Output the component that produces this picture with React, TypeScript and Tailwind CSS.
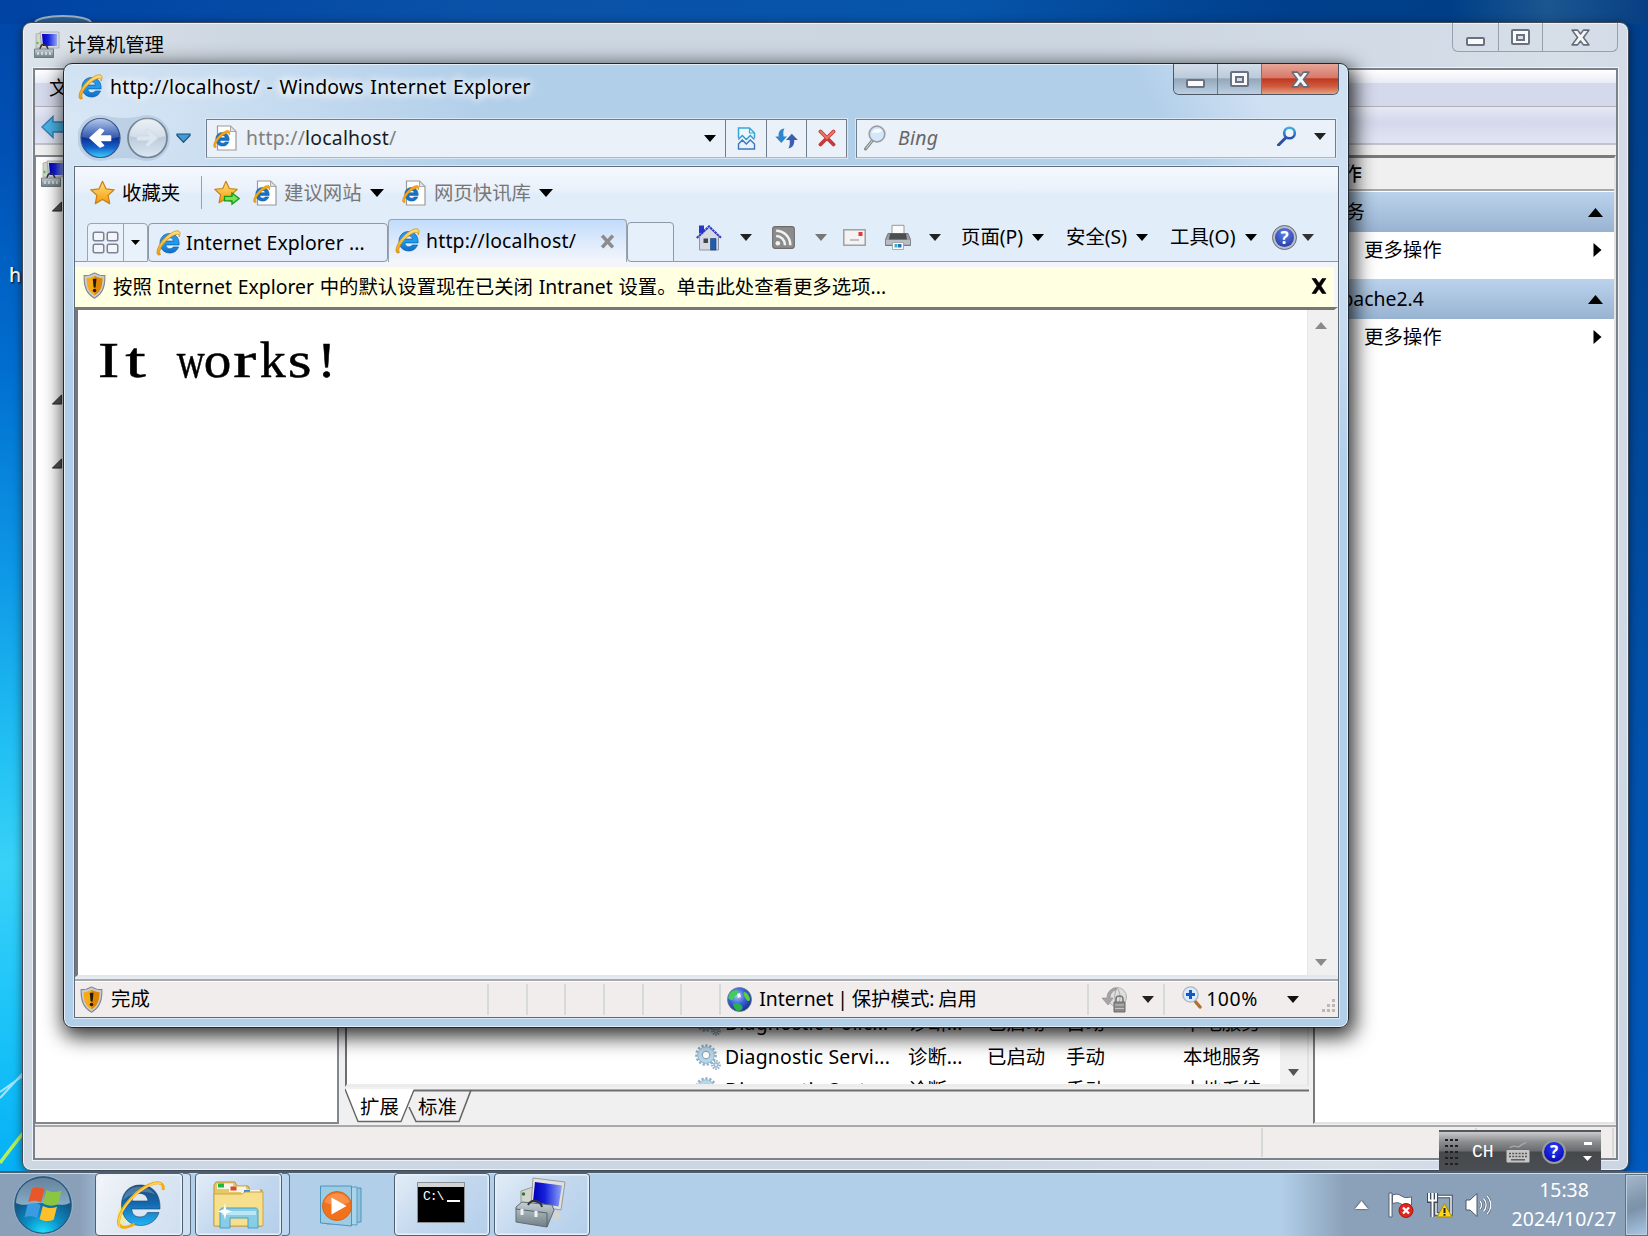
import React from "react";

type P = { className?: string };

/* ---------- small glyphs ---------- */
const Down = ({ className = "w-[11px] h-[7px] text-black" }: P) => (
  <svg viewBox="0 0 12 7" preserveAspectRatio="none" className={"shrink-0 " + className}>
    <path d="M0 0h12L6 7z" fill="currentColor" />
  </svg>
);
const Up = ({ className = "w-[15px] h-[9px] text-black" }: P) => (
  <svg viewBox="0 0 12 7" preserveAspectRatio="none" className={"shrink-0 " + className}>
    <path d="M0 7h12L6 0z" fill="currentColor" />
  </svg>
);
const Right = ({ className = "" }: P) => (
  <svg viewBox="0 0 8 14" className={"shrink-0 w-[9px] h-[14px] " + className}>
    <path d="M0 0v14l8-7z" fill="#000" />
  </svg>
);

/* ---------- icons ---------- */
const Gradients = () => (
  <svg className="absolute w-0 h-0">
    <defs>
      <linearGradient id="ieBlue" x1="0" y1="0" x2="0" y2="1">
        <stop offset="0" stopColor="#2a8fe0" />
        <stop offset=".5" stopColor="#1c9df0" />
        <stop offset="1" stopColor="#0e6cc4" />
      </linearGradient>
      <linearGradient id="ieDark" x1="0" y1="0" x2="0" y2="1">
        <stop offset="0" stopColor="#1c4b78" />
        <stop offset=".45" stopColor="#1567ad" />
        <stop offset="1" stopColor="#22b4f5" />
      </linearGradient>
      <linearGradient id="gold" x1="0" y1="0" x2="0" y2="1">
        <stop offset="0" stopColor="#ffe27a" />
        <stop offset="1" stopColor="#f39a0c" />
      </linearGradient>
      <linearGradient id="screen" x1="0" y1="0" x2="1" y2="0">
        <stop offset="0" stopColor="#0000b4" />
        <stop offset=".4" stopColor="#1420dc" />
        <stop offset="1" stopColor="#8fa4f5" />
      </linearGradient>
      <linearGradient id="steel" x1="0" y1="0" x2="0" y2="1">
        <stop offset="0" stopColor="#c5d0d4" />
        <stop offset="1" stopColor="#6f7f86" />
      </linearGradient>
      <radialGradient id="globe" cx=".4" cy=".35" r=".7">
        <stop offset="0" stopColor="#a8c4f8" />
        <stop offset=".5" stopColor="#3a62d8" />
        <stop offset="1" stopColor="#16288c" />
      </radialGradient>
      <linearGradient id="lens" x1="0" y1="0" x2="0" y2="1">
        <stop offset="0" stopColor="#3fb2e0" />
        <stop offset="1" stopColor="#2a4fa8" />
      </linearGradient>
      <linearGradient id="backBtn" x1="0" y1="0" x2="0" y2="1">
        <stop offset="0" stopColor="#a9bfe4" />
        <stop offset=".3" stopColor="#3f68bd" />
        <stop offset=".5" stopColor="#0c2f92" />
        <stop offset=".75" stopColor="#1464cc" />
        <stop offset="1" stopColor="#39d3ff" />
      </linearGradient>
      <linearGradient id="fwdBtn" x1="0" y1="0" x2="0" y2="1">
        <stop offset="0" stopColor="#dfe9f2" />
        <stop offset=".5" stopColor="#bccbdb" />
        <stop offset="1" stopColor="#dce9f5" />
      </linearGradient>
      <radialGradient id="orb" cx=".5" cy="1" r=".95">
        <stop offset="0" stopColor="#1fe4ff" />
        <stop offset=".35" stopColor="#0a8fc6" />
        <stop offset=".7" stopColor="#135787" />
        <stop offset="1" stopColor="#35597c" />
      </radialGradient>
      <linearGradient id="orbGloss" x1="0" y1="0" x2="0" y2="1">
        <stop offset="0" stopColor="#ffffff" stopOpacity=".25" />
        <stop offset="1" stopColor="#ffffff" stopOpacity=".5" />
      </linearGradient>
    </defs>
  </svg>
);

const IE = ({ className = "w-[26px] h-[26px]" }: P) => (
  <svg viewBox="0 0 26 26" className={"shrink-0 " + className}>
    <path
      d="M13.5 3.500C8 3.500 4 7.700 4 13.200s4 9.800 9.800 9.800c4.200 0 7.300-2.200 8.700-6h-5.200c-.7 1.200-1.900 1.800-3.400 1.800-2.300 0-3.900-1.500-4-3.900h13.200C23.600 8.200 19.600 3.500 13.500 3.500zm-3.600 7.600c.3-2 1.700-3.300 3.800-3.300s3.500 1.200 3.700 3.300z"
      fill="url(#ieBlue)"
      stroke="#0d5aa8"
      strokeWidth=".7"
    />
    <path
      d="M4.500 24.500C1.800 26 .4 24 1.200 20.500 2.500 14.500 9 6 16.500 2.300 21 0 24.500.3 24 4.200c-.1.900-.4 1.900-.8 2.800.2-2.300-.8-3.300-3.400-2.500C13.500 6.600 5.500 14.500 4 20.500c-.4 1.800-.2 3 .5 4z"
      fill="url(#gold)"
      stroke="#c98a10"
      strokeWidth=".7"
    />
  </svg>
);
const BigIE = () => (
  <svg viewBox="0 0 56 52" className="w-[56px] h-[52px]">
    <path d="M12 48C2 44 6 30 12 22l8 4z" fill="#eef07a" opacity=".6" />
    <path
      d="M29 6C18 6 10.500 14 10.500 26S18 46.500 29.500 46.500c9 0 16-5 18.500-13H36.500c-1.500 3-4 4.500-7.500 4.500-5 0-8-3-8.300-8H49C49.500 15 42 6 29 6zm-8 16c.8-4.500 3.600-7.500 8-7.500s7.500 3 8 7.500z"
      fill="url(#ieDark)"
      stroke="#10426e"
      strokeWidth=".6"
    />
    <path d="M12 21C14 11 22 7 29 7.500c6 0 12 3 15 8-8-4-20-4-32 5.500z" fill="#fff" opacity=".22" />
    <path
      d="M52 11c1.500-6-3-8.500-10-6.500C28 8.500 9 28 7.500 42c-.5 6 5 9 16 3"
      fill="none"
      stroke="#f3ad13"
      strokeWidth="3"
    />
    <path d="M50 5C44 1 26 11 14 28 8 36 6 42 9 48" fill="none" stroke="#ffd560" strokeWidth="1.300" />
  </svg>
);
const PageIE = () => (
  <svg viewBox="0 0 24 26" className="w-[24px] h-[26px] shrink-0">
    <path d="M4.500 1h13l5.500 5.500V25H4.500z" fill="#fff" stroke="#9a9a9a" strokeWidth="1.200" />
    <path d="M17.500 1v5.500H23z" fill="#e4e4e4" stroke="#a8a8a8" />
    <g transform="translate(0 5) scale(.7)">
      <path
        d="M13.500 3.500C8 3.500 4 7.700 4 13.200s4 9.800 9.800 9.800c4.200 0 7.300-2.200 8.700-6h-5.200c-.7 1.200-1.900 1.800-3.400 1.800-2.300 0-3.900-1.500-4-3.900h13.200C23.600 8.200 19.600 3.500 13.500 3.500zm-3.600 7.600c.3-2 1.700-3.300 3.800-3.300s3.500 1.200 3.700 3.300z"
        fill="#1574c8"
        stroke="#0d5aa8"
        strokeWidth=".8"
      />
      <path
        d="M4.500 24.500C1.800 26 .4 24 1.200 20.500 2.500 14.500 9 6 16.500 2.300 21 0 24.500.3 24 4.200c-.1.900-.4 1.900-.8 2.800.2-2.300-.8-3.300-3.400-2.500C13.500 6.600 5.500 14.500 4 20.500c-.4 1.800-.2 3 .5 4z"
        fill="#f7a813"
        stroke="#e08e08"
        strokeWidth="1"
      />
    </g>
  </svg>
);
const starPath = "M12 .8l3.300 7.200 7.900.9-5.800 5.400 1.500 7.900L12 18.300l-6.900 3.900 1.500-7.900L.8 8.900l7.900-.9z";
const Star = () => (
  <svg viewBox="0 0 24 24" className="w-[25px] h-[26px] shrink-0">
    <path d={starPath} fill="url(#gold)" stroke="#c98216" strokeWidth="1.200" strokeLinejoin="round" />
  </svg>
);
const StarAdd = () => (
  <svg viewBox="0 0 26 25" className="w-[26px] h-[26px] shrink-0">
    <path d={starPath} fill="url(#gold)" stroke="#c98216" strokeWidth="1.200" strokeLinejoin="round" />
    <path d="M10.500 15.800h7.500v-3.300l7.200 5.500-7.200 5.700v-3.400h-7.500z" fill="#7be05a" stroke="#149a14" strokeWidth="1.300" />
  </svg>
);
const Shield = () => (
  <svg viewBox="0 0 22 26" className="w-[23px] h-[27px] shrink-0">
    <path d="M11 .8c3 2 6.500 2.700 10 2.700.4 10-1.500 17.500-10 21.700C2.500 21 .6 13.500 1 3.500c3.500 0 7-.7 10-2.700z" fill="#c9ccd0" stroke="#84888d" />
    <path d="M11 3.600c2.300 1.500 4.800 2.200 7.600 2.400 0 7.700-1.600 13-7.600 16.400C5 19 3.400 13.700 3.400 6c2.800-.2 5.300-.9 7.600-2.400z" fill="#f7ab18" />
    <path d="M11 3.600c2.300 1.500 4.800 2.200 7.600 2.400 0 7.700-1.600 13-7.600 16.400z" fill="#dd8505" />
    <path d="M9.300 6.500h3.600l-.8 8.500h-2z" fill="#26190a" />
    <circle cx="11" cy="17.800" r="1.700" fill="#26190a" />
  </svg>
);
const ComputerIcon = () => (
  <svg viewBox="0 0 26 27" className="w-[26px] h-[27px] shrink-0">
    <path d="M2 3l5-1v15H2z" fill="#d6d6d0" stroke="#9a9a94" strokeWidth=".6" />
    <circle cx="3.500" cy="12" r="1.200" fill="#38d038" />
    <path d="M6 1h19v16H8z" fill="#d9dadd" stroke="#a2a4a8" strokeWidth=".8" />
    <path d="M8 3h15v12H9z" fill="url(#screen)" />
    <path d="M6 18c1-6 6-6 8 0" fill="none" stroke="#333" strokeWidth="1.500" />
    <path d="M.5 18h19v8.500H.5z" fill="url(#steel)" stroke="#5f6b70" strokeWidth=".8" />
    <path d="M4 21v3M8 21v3M12 21v3M16 21v3" stroke="#e8eef0" strokeWidth="1.300" />
  </svg>
);
const Home = () => (
  <svg viewBox="0 0 26 26" className="w-[26px] h-[27px] shrink-0">
    <path d="M3 1h5v8H3z" fill="#2a35c8" />
    <path d="M3.500 12L13 3l9.500 9v13.500h-19z" fill="#d5d9e4" stroke="#8f95a5" />
    <path d="M.8 13.500L13 1.800l12.200 11.700" fill="none" stroke="#2b3ac6" strokeWidth="2" strokeDasharray="2.500 .6" />
    <path d="M7.500 14h4.500v4.500H7.500z" fill="#444" />
    <path d="M14.500 14h5.500v11.500h-5.500z" fill="#1d5fae" stroke="#163f74" strokeWidth=".6" />
  </svg>
);
const Rss = () => (
  <svg viewBox="0 0 22 22" className="w-[23px] h-[23px] shrink-0">
    <rect x=".6" y=".6" width="20.800" height="20.800" rx="2.500" fill="#8c8c8c" stroke="#6c6c6c" />
    <circle cx="5.600" cy="16.500" r="2.200" fill="#f2f2f2" />
    <path d="M4 9.500c4.500 0 8.500 3.800 8.500 8.800M4 4.500c7.500 0 13.500 6.300 13.500 13.800" fill="none" stroke="#f2f2f2" strokeWidth="2.400" />
  </svg>
);
const Mail = () => (
  <svg viewBox="0 0 23 17" className="w-[23px] h-[17px] shrink-0">
    <rect x=".8" y=".8" width="21.400" height="15.400" fill="#f3f3f3" stroke="#9a9a9a" strokeWidth="1.400" />
    <path d="M7 11h9" stroke="#aaa" strokeWidth="1.400" />
    <path d="M15.500 3h4v4h-4z" fill="#e23838" />
  </svg>
);
const Printer = () => (
  <svg viewBox="0 0 26 26" className="w-[26px] h-[27px] shrink-0">
    <path d="M7 .8h12V10H7z" fill="#fafafa" stroke="#999" />
    <path d="M3 9h20l2.500 6v6H.5v-6z" fill="#9a9fa3" stroke="#74797d" />
    <path d="M5 9h16l1 6H4z" fill="#4b4f52" />
    <path d="M.8 15.500h24.400V20H.8z" fill="#b9bec2" />
    <path d="M7.500 18h11v7h-11z" fill="#fff" stroke="#999" strokeWidth=".8" />
    <path d="M9.500 19.500h3v3.500h-3z" fill="#38b0c8" />
    <path d="M13 19.500h3.500v3.500H13z" fill="#2b6fb8" />
  </svg>
);
const HelpIcon = () => (
  <span className="w-[25px] h-[25px] shrink-0 rounded-full border-[1.5px] border-[#6b6b72] bg-[#b9bccb] p-[2px]">
    <span className="flex w-full h-full items-center justify-center rounded-full bg-[radial-gradient(circle_at_50%_30%,#5f80e6,#1c309a)] text-white text-[17px] font-bold leading-none">
      ?
    </span>
  </span>
);
const Magnifier = ({ className = "" }: P) => (
  <svg viewBox="0 0 20 20" className={"shrink-0 " + className}>
    <path d="M8 12.500L1.500 19" stroke="#2a4fa8" strokeWidth="3" strokeLinecap="round" />
    <circle cx="12.500" cy="7" r="5.300" fill="#eef6fc" stroke="url(#lens)" strokeWidth="2.600" />
  </svg>
);
const GreyMagnifier = () => (
  <svg viewBox="0 0 22 26" className="w-[22px] h-[26px] shrink-0">
    <path d="M8 16L1.500 24" stroke="#888" strokeWidth="3" strokeLinecap="round" />
    <path d="M8 16L2 23.500" stroke="#ddd" strokeWidth="1" strokeLinecap="round" />
    <circle cx="13" cy="9" r="7.800" fill="#d5e8fb" stroke="#9c9ca4" strokeWidth="1.700" />
    <path d="M8 8c1-3.500 6-5.500 10-2.500-1 3-6 2-10 2.500z" fill="#fff" opacity=".8" />
  </svg>
);
const Compat = () => (
  <svg viewBox="0 0 18 23" className="w-[19px] h-[23px] shrink-0">
    <path d="M1 11V1h11l5 5v5" fill="#eaf7fd" stroke="#3aa6d4" strokeWidth="1.500" />
    <path d="M12 1v5h5" fill="none" stroke="#3aa6d4" strokeWidth="1.200" />
    <path d="M.8 12.500l4-4 4 4 4-4 4.200 4" fill="none" stroke="#3796cc" strokeWidth="1.400" />
    <path d="M1 17v5h16v-5l-4.200-4-4 4-4-4z" fill="#eaf3fc" stroke="#3a78bc" strokeWidth="1.400" />
  </svg>
);
const Refresh = () => (
  <svg viewBox="0 0 23 21" className="w-[23px] h-[21px] shrink-0">
    <path d="M9.500.5C5 1 3.200 4 3.600 8.500H.3L6.300 15l5.700-6.500H8.600C8 4.500 8.300 2.500 9.500.5z" fill="#2f86cf" />
    <path d="M13.300 20.500c4.300-.8 6.200-4 5.900-8.500h3.600L16.800 5.800 11 12h3.700c.4 4-.2 6.500-1.400 8.500z" fill="#3a5fb2" />
  </svg>
);
const StopX = () => (
  <svg viewBox="0 0 18 18" className="w-[18px] h-[18px] shrink-0">
    <path d="M2.500 2.500l13 13M15.500 2.500l-13 13" stroke="#c83a3a" strokeWidth="3.800" strokeLinecap="round" />
    <path d="M2.500 2.500L9 9l6.500-6.500" fill="none" stroke="#ea7468" strokeWidth="2" strokeLinecap="round" />
  </svg>
);
const NavButtons = () => (
  <svg viewBox="0 0 92 46" className="w-[92px] h-[46px] shrink-0">
    <path d="M22 0C28 0 32 3 46 3S63 0 69 0a23 23 0 010 46C63 46 60 43 46 43S28 46 22 46A23 23 0 0122 0z" fill="#9fb8d4" opacity=".45" />
    <circle cx="22.500" cy="23" r="19.500" fill="url(#backBtn)" stroke="#35558f" strokeWidth="1.200" />
    <path d="M4 22a18.500 18.500 0 0137 0c-10 3-27 3-37 0z" fill="#fff" opacity=".18" />
    <path d="M32.500 21H21l4.500-5.500-3.500-1.500L12 23l10 9 3.500-1.500L21 25.500h11.500z" fill="#fff" stroke="#fff" strokeWidth="1.600" strokeLinejoin="round" />
    <circle cx="69.500" cy="23" r="19.500" fill="url(#fwdBtn)" stroke="#76828f" strokeWidth="1.700" />
    <path d="M52 21a17.500 17.500 0 0135 0c-10 3-25 3-35 0z" fill="#fff" opacity=".35" />
    <path d="M59 21h12l-4-5.500 3-1.500 10 9-10 9-3-1.500 4-5H59z" fill="#dde6ef" stroke="#cdd8e3" strokeWidth=".8" />
  </svg>
);
const Globe = () => (
  <svg viewBox="0 0 25 25" className="w-[25px] h-[25px] shrink-0">
    <circle cx="12.500" cy="12.500" r="12" fill="url(#globe)" stroke="#6c7890" strokeWidth=".8" />
    <path d="M2 8c1-3 6-6 9-4 1 3-1 4-3 5s-1 5-4 4-3-2-2-5z" fill="#3fcf52" />
    <path d="M17 5c3 0 6 4 6 8-1 2-3 1-4-1s-3-4-2-7z" fill="#57d13c" />
    <path d="M6 17c3-2 7-1 9 2s-2 5-4 5-5-4-5-7z" fill="#25b34a" />
    <path d="M10 7l3-1 1 4-3 1z" fill="#fff" opacity=".9" />
  </svg>
);
const ProtectIcon = () => (
  <svg viewBox="0 0 26 27" className="w-[26px] h-[27px] shrink-0">
    <circle cx="16" cy="11" r="9.500" fill="#dedede" stroke="#b0b0b0" />
    <path d="M16 2c-3 4-3 14 0 18M16 2c4 4 4 14 0 18" fill="none" stroke="#aaa" />
    <path d="M15 2C9 3 6 7 6 12H1l6 7 5-7H9c0-4 2-7 6-8z" fill="#a6a6a6" stroke="#8a8a8a" strokeWidth=".6" />
    <path d="M13 16h11v10H13z" fill="#8b8b8b" stroke="#6c6c6c" />
    <path d="M15 16v-3c0-4 7-4 7 0v3" fill="none" stroke="#777" strokeWidth="1.600" />
    <path d="M14 19h9M14 22.500h9" stroke="#c4c4c4" />
  </svg>
);
const ZoomIcon = () => (
  <svg viewBox="0 0 20 23" className="w-[20px] h-[23px] shrink-0">
    <path d="M12 14l6 7" stroke="#b3702c" strokeWidth="3.400" strokeLinecap="round" />
    <circle cx="8.500" cy="8.500" r="7.600" fill="#dbeafc" stroke="#a9b6c8" strokeWidth="1.400" />
    <path d="M8.500 4v9M4 8.500h9" stroke="#1458c8" strokeWidth="3" />
  </svg>
);
const Gear = () => (
  <svg viewBox="0 0 26 26" className="w-[26px] h-[26px] shrink-0">
    <circle cx="11" cy="11" r="9.300" fill="none" stroke="#8fb0c6" strokeWidth="3" strokeDasharray="2.200 1.700" />
    <circle cx="11" cy="11" r="6.300" fill="none" stroke="#b6d6ea" strokeWidth="4.500" />
    <circle cx="11" cy="11" r="8.300" fill="none" stroke="#8fb3c9" strokeWidth=".8" />
    <circle cx="11" cy="11" r="3.800" fill="#fff" stroke="#7f98ab" strokeWidth="1" />
    <circle cx="21" cy="21" r="3.600" fill="none" stroke="#8fb0c6" strokeWidth="2.600" strokeDasharray="1.400 1" />
    <circle cx="21" cy="21" r="2" fill="#dbeaf3" stroke="#86a8be" />
  </svg>
);

/* ---------- window caption buttons ---------- */
const MinGlyph = () => <span className="mt-[8px] w-[19px] h-[9px] rounded-[2px] border-2 border-[#6a7180] bg-[#fbfbfb]" />;
const MaxGlyph = () => (
  <span className="flex w-[19px] h-[16px] items-center justify-center rounded-[2px] border-2 border-[#6a7180] bg-[#fbfbfb]">
    <span className="w-[9px] h-[7px] border-2 border-[#6a7180] bg-[#d8dfe8]" />
  </span>
);
const CloseGlyph = () => (
  <svg viewBox="0 0 18 16" className="w-[19px] h-[17px]">
    <path
      d="M1 1h5.200L9 4.600 11.800 1H17l-5.200 7L17 15h-5.200L9 11.400 6.200 15H1l5.200-7z"
      fill="#f6f6f6"
      stroke="#646c79"
      strokeWidth="1.500"
      strokeLinejoin="round"
    />
  </svg>
);
const Caption = ({ active }: { active?: boolean }) =>
  active ? (
    <div className="flex h-[31px] w-[166px] shrink-0 overflow-hidden rounded-b-[6px] border border-t-0 border-[#4c5866]">
      <div className="flex w-[44px] items-center justify-center border-r border-[#68788a] bg-[linear-gradient(#d3deea_0%,#bccad9_45%,#93a7bb_50%,#bccfe2_100%)]">
        <MinGlyph />
      </div>
      <div className="flex w-[44px] items-center justify-center border-r border-[#68788a] bg-[linear-gradient(#d3deea_0%,#bccad9_45%,#93a7bb_50%,#bccfe2_100%)]">
        <MaxGlyph />
      </div>
      <div className="flex flex-1 items-center justify-center bg-[linear-gradient(#e6a698_0%,#d7796a_45%,#bf3820_50%,#cf5c40_75%,#e6a282_100%)]">
        <CloseGlyph />
      </div>
    </div>
  ) : (
    <div className="flex h-[29px] w-[166px] shrink-0 rounded-b-[6px] border border-t-0 border-[#97a1ad]">
      <div className="flex w-[46px] items-center justify-center border-r border-[#97a1ad]">
        <MinGlyph />
      </div>
      <div className="flex w-[44px] items-center justify-center border-r border-[#97a1ad]">
        <MaxGlyph />
      </div>
      <div className="flex flex-1 items-center justify-center">
        <CloseGlyph />
      </div>
    </div>
  );

/* ---------- computer management window ---------- */
const ServiceRow = ({ name, state, start, login }: { name: string; state: string; start: string; login: string }) => (
  <div className="flex h-[33.700px] shrink-0 items-center whitespace-nowrap">
    <span className="ml-[348px] w-[30px]">
      <Gear />
    </span>
    <span className="w-[183px] tracking-[0.200px]">{name}</span>
    <span className="w-[79px]">诊断...</span>
    <span className="w-[79px]">{state}</span>
    <span className="w-[117px]">{start}</span>
    <span>{login}</span>
  </div>
);

const ManagementWindow = () => (
  <div className="absolute left-[22px] top-[22px] flex h-[1149px] w-[1607px] flex-col rounded-[9px] border border-[#3f4a56] bg-[linear-gradient(100deg,#dde3ea_0,#cdd7e2_12%,#ccd6e1_60%,#d6dee8_85%,#ccd6e2_100%)] shadow-[inset_0_0_0_1px_#edf2f7,0_2px_10px_rgba(0,0,0,0.5)]">
    <div className="flex h-[45px] shrink-0 items-start justify-between pl-[11px] pr-[10px]">
      <div className="flex h-[43px] items-center">
        <ComputerIcon />
        <span className="ml-[7px]">计算机管理</span>
      </div>
      <Caption />
    </div>
    <div className="mx-[10px] mb-[10px] flex flex-1 flex-col overflow-hidden border-2 border-[#7b828c] bg-[#f0f0f0] shadow-[0_0_0_1px_#edf2f7]">
      <div className="flex h-[37px] shrink-0 items-center border-b border-[#b0b0b8] bg-[linear-gradient(#fff_0%,#e9ecf6_36%,#d5d9ec_37%,#d5d9ec_100%)] pl-[14px]">
        文件(F)
      </div>
      <div className="flex h-[38px] shrink-0 items-center border-b-2 border-[#c0c2cc] bg-[linear-gradient(#e6e9f5,#d4d8eb_40%,#e0e4f3)] pl-[6px] pt-[3px]">
        <svg viewBox="0 0 30 24" className="h-[24px] w-[30px]">
          <path d="M1 12L12 1.500V7h16v10H12v5.500z" fill="#4bb4e6" stroke="#2f80b4" strokeWidth="1.400" />
        </svg>
      </div>
      <div className="mt-[10px] flex h-[969px] shrink-0">
        {/* navigation tree */}
        <div className="flex w-[304px] shrink-0 flex-col border-2 border-l border-[#828790] bg-white">
          <div className="mt-[3px] ml-[5px]">
            <ComputerIcon />
          </div>
          <svg viewBox="0 0 12 12" className="mt-[14px] ml-[15px] h-[11px] w-[12px]">
            <path d="M11 1v10H1z" fill="#555" stroke="#222" />
          </svg>
          <svg viewBox="0 0 12 12" className="mt-[182px] ml-[15px] h-[11px] w-[12px]">
            <path d="M11 1v10H1z" fill="#555" stroke="#222" />
          </svg>
          <svg viewBox="0 0 12 12" className="mt-[53px] ml-[15px] h-[11px] w-[12px]">
            <path d="M11 1v10H1z" fill="#555" stroke="#222" />
          </svg>
        </div>
        {/* services list */}
        <div className="ml-[6px] flex w-[964px] shrink-0 flex-col">
          <div className="flex h-[932px] border-2 border-b-[3px] border-b-[#ececec] border-r-[#e3e3e3] border-[#6e6e6e] bg-white">
            <div className="flex flex-1 flex-col justify-end overflow-hidden">
              <div className="flex h-[78px] flex-col overflow-hidden">
                <ServiceRow name="Diagnostic Polic..." state="已启动" start="自动" login="本地服务" />
                <ServiceRow name="Diagnostic Servi..." state="已启动" start="手动" login="本地服务" />
                <ServiceRow name="Diagnostic Syst..." state="" start="手动" login="本地系统" />
              </div>
            </div>
            <div className="flex w-[27px] items-end justify-center bg-[#f1f1f1] pb-[8px]">
              <Down className="h-[7px] w-[11px] text-[#555]" />
            </div>
          </div>
          <div className="relative h-[37px] w-full">
            <svg viewBox="0 0 964 37" className="absolute left-0 top-0 h-[37px] w-[964px]">
              <path d="M68 3.500h896" stroke="#6e6e6e" strokeWidth="2" />
              <path d="M0 2l13 32h43L69 2z" fill="#fff" />
              <path d="M0 2l13 32.500h43L69 3" fill="none" stroke="#666" strokeWidth="1.400" />
              <path d="M64 20l7 14.500h43L126 3" fill="none" stroke="#666" strokeWidth="1.600" />
            </svg>
            <div className="relative flex h-[37px] items-center pl-[15px] pt-[2px]">
              <span className="w-[58px]">扩展</span>
              <span>标准</span>
            </div>
          </div>
        </div>
        {/* actions pane */}
        <div className="ml-[4px] flex w-[303px] shrink-0 flex-col border-[2px] border-t-[3px] border-b-[#e3e3e3] border-r-[#e3e3e3] border-[#7a7a7a] bg-white">
          <div className="flex h-[33px] items-center border-b-2 border-[#a8a8a8] bg-[#f0f0f0] pl-[8px] font-medium">操作</div>
          <div className="mt-px flex h-[40px] items-center justify-between bg-[linear-gradient(#bad2ec,#98b3d1)] pl-[11px] pr-[11px]">
            <span>服务</span>
            <Up />
          </div>
          <div className="flex h-[47px] items-start justify-between pl-[49px] pr-[12px] pt-[6px]">
            <span className="leading-[24px]">更多操作</span>
            <Right className="mt-[5px]" />
          </div>
          <div className="flex h-[40px] items-center justify-between bg-[linear-gradient(#bad2ec,#98b3d1)] pl-[14px] pr-[11px]">
            <span>Apache2.4</span>
            <Up />
          </div>
          <div className="flex h-[47px] items-start justify-between pl-[49px] pr-[12px] pt-[6px]">
            <span className="leading-[24px]">更多操作</span>
            <Right className="mt-[5px]" />
          </div>
        </div>
      </div>
      <div className="mt-px flex flex-1 border-t-2 border-[#a9a9a9] bg-[#f1edec] py-[1px]">
        <span className="w-[1228px] border-r-2 border-[#d5d9d9]" />
        <span className="w-[214px] border-r-2 border-[#d5d9d9]" />
        <span className="w-[137px] border-r-2 border-[#d5d9d9]" />
      </div>
    </div>
  </div>
);

/* ---------- internet explorer window ---------- */
const navBox = "flex h-[39px] items-center border border-[#6f7d8c] border-b-[#a9b7c6] bg-[#eaf1f9] shadow-[0_0_0_1px_rgba(230,240,250,0.7)]";

/* Each letter sits in an equal-width cell and is stretched toward it, as in a fixed-pitch serif face. */
const letterScale: Record<string, string> = {
  I: "scale-x-[1.250]",
  t: "scale-x-[1.450]",
  w: "scale-x-[0.760]",
  o: "scale-x-[1.080]",
  r: "scale-x-[1.350]",
  k: "scale-x-[1.020]",
  s: "scale-x-[1.200]",
  "!": "scale-x-[1.100]",
};

const IEWindow = () => (
  <div className="absolute left-[63px] top-[63px] flex h-[965px] w-[1286px] flex-col rounded-[9px] border-[1.500px] border-[#20272e] bg-[radial-gradient(ellipse_420px_240px_at_0_60px,#d9e7f5_0,#cadef1_40%,rgba(178,207,234,0)_100%),linear-gradient(62deg,rgba(178,207,234,0)_88%,#cfe0f2_94%),linear-gradient(#b2cfea,#b2cfea)] shadow-[inset_0_0_0_1px_#e4eef8,3px_6px_20px_3px_rgba(0,0,0,0.8)]">
    <div className="flex h-[46px] shrink-0 items-start justify-between pl-[14px] pr-[9px]">
      <div className="flex h-[45px] items-center">
        <IE />
        <span className="ml-[6px] tracking-[0.200px] [word-spacing:1.300px] [text-shadow:0_0_12px_#fff,0_0_12px_#fff,0_0_8px_#fff]">
          http://localhost/ - Windows Internet Explorer
        </span>
      </div>
      <Caption active />
    </div>
    <div className="flex h-[56px] shrink-0 items-center">
      <span className="ml-[14px]">
        <NavButtons />
      </span>
      <svg viewBox="0 0 15 10" className="ml-[6px] h-[10px] w-[15px] shrink-0">
        <path d="M1 1h13v1.500L7.500 9.300 1 2.500z" fill="#3f9bd0" stroke="#1d4f84" strokeWidth="1.200" />
      </svg>
      <div className={navBox + " ml-[15px] w-[641px] shrink-0"}>
        <span className="ml-[6px]">
          <PageIE />
        </span>
        <span className="ml-[9px] flex-1 tracking-[0.220px] text-[#1c1c1c]">
          <span className="text-[#808080]">http://</span>localhost<span className="text-[#808080]">/</span>
        </span>
        <Down className="mr-[9px] h-[7px] w-[12px] text-black" />
        <span className="flex h-full w-[41px] items-center justify-center border-l border-[#6f7d8c]">
          <Compat />
        </span>
        <span className="flex h-full w-[40px] items-center justify-center border-l border-[#6f7d8c]">
          <Refresh />
        </span>
        <span className="flex h-full w-[40px] items-center justify-center border-l border-[#6f7d8c]">
          <StopX />
        </span>
      </div>
      <div className={navBox + " ml-[9px] w-[480px] shrink-0"}>
        <span className="ml-[7px]">
          <GreyMagnifier />
        </span>
        <span className="ml-[12px] flex-1 italic tracking-[0.300px] text-[#666]">Bing</span>
        <Magnifier className="mb-[4px] h-[20px] w-[20px]" />
        <Down className="mb-[3px] ml-[17px] mr-[9px] h-[7px] w-[12px] text-[#222]" />
      </div>
    </div>

    <div className="mb-[9px] ml-[10px] mr-[9px] flex flex-1 flex-col overflow-hidden border border-[#5f6b78] bg-[#e1edf9] shadow-[0_0_0_1px_#dbe8f5]">
      {/* favourites bar */}
      <div className="flex h-[51px] shrink-0 items-center whitespace-nowrap bg-[linear-gradient(#f5f8fe_0%,#eaf1fb_45%,#e1edf9_55%)]">
        <span className="ml-[15px]">
          <Star />
        </span>
        <span className="ml-[7px] w-[59px]">收藏夹</span>
        <span className="ml-[20px] h-[33px] w-px bg-[#98a2ae]" />
        <span className="ml-[12px]">
          <StarAdd />
        </span>
        <span className="ml-[13px]">
          <PageIE />
        </span>
        <span className="ml-[7px] w-[77px] text-[#777]">建议网站</span>
        <Down className="ml-[9px] h-[8px] w-[14px] text-black" />
        <span className="ml-[18px]">
          <PageIE />
        </span>
        <span className="ml-[8px] w-[96px] text-[#777]">网页快讯库</span>
        <Down className="ml-[9px] h-[8px] w-[14px] text-black" />
      </div>
      {/* tabs and command bar */}
      <div className="flex h-[44px] shrink-0 items-end whitespace-nowrap">
        <span className="h-full w-[12px] border-b border-[#8e98a6]" />
        <div className="flex h-[39px] w-[61px] rounded-t-[4px] border border-[#9aa3b0] bg-[#e9f1fa]">
          <span className="flex w-[36px] items-center justify-center border-r border-[#9aa3b0]">
            <span className="grid grid-cols-2 gap-[3px]">
              {[0, 1, 2, 3].map((i) => (
                <span key={i} className="h-[9px] w-[11px] rounded-[2px] border-[1.500px] border-[#7d8194] bg-[#f4f4fb] shadow-[0_0_0_0.500px_#7d8194]" />
              ))}
            </span>
          </span>
          <span className="flex flex-1 items-center justify-center">
            <Down className="h-[5px] w-[9px] text-black" />
          </span>
        </div>
        <div className="flex h-[39px] w-[240px] items-center rounded-[4px] border border-[#8e98a6] bg-[#e3eefa] pl-[7px]">
          <IE />
          <span className="ml-[4px] tracking-[0.120px]">Internet Explorer ...</span>
        </div>
        <div className="flex h-[43px] w-[239px] items-center rounded-t-[4px] border border-b-0 border-[#9aa3b0] bg-[linear-gradient(#c2dcfb,#dceafb_50%,#f3f6fc)] pl-[6px]">
          <IE />
          <span className="ml-[5px] tracking-[0.200px]">http://localhost/</span>
          <svg viewBox="0 0 14 14" className="ml-auto mr-[11px] h-[15px] w-[15px]">
            <path d="M2 1.500l10 11M12 1.500l-10 11" stroke="#8c8c8c" strokeWidth="3.400" />
          </svg>
        </div>
        <div className="h-[40px] w-[47px] rounded-[4px] rounded-br-none border border-[#8e98a6] bg-[#e6f0fa]" />
        <div className="flex h-full flex-1 items-center border-b border-[#8e98a6] pb-[5px]">
          <span className="ml-[22px]">
            <Home />
          </span>
          <Down className="ml-[18px] h-[7px] w-[12px] text-[#222]" />
          <span className="ml-[20px]">
            <Rss />
          </span>
          <Down className="ml-[20px] h-[7px] w-[12px] text-[#777]" />
          <span className="ml-[16px]">
            <Mail />
          </span>
          <span className="ml-[19px]">
            <Printer />
          </span>
          <Down className="ml-[18px] h-[7px] w-[12px] text-[#222]" />
          <span className="ml-[20px] w-[63px]">页面(P)</span>
          <Down className="ml-[8px] h-[7px] w-[12px] text-black" />
          <span className="ml-[22px] w-[62px]">安全(S)</span>
          <Down className="ml-[8px] h-[7px] w-[12px] text-black" />
          <span className="ml-[22px] w-[67px]">工具(O)</span>
          <Down className="ml-[8px] mr-[15px] h-[7px] w-[12px] text-black" />
          <HelpIcon />
          <Down className="ml-[5px] h-[7px] w-[12px] text-[#333]" />
        </div>
      </div>
      <div className="h-[5px] shrink-0 bg-[#f3f5fb]" />
      {/* information bar */}
      <div className="flex h-[40px] shrink-0 items-center border-r-4 border-[#f3f5fb] bg-[#ffffe1] pl-[8px] pr-[7px]">
        <span className="mb-[4px]">
          <Shield />
        </span>
        <span className="ml-[7px] flex-1 whitespace-nowrap [word-spacing:0.700px]">
          按照 Internet Explorer 中的默认设置现在已关闭 Intranet 设置。单击此处查看更多选项...
        </span>
        <svg viewBox="0 0 16 16" className="mb-[2px] h-[16px] w-[16px]">
          <path d="M1 .5h3.800L8 5.200 11.200.5H15L10 8l5 7.500h-3.800L8 10.800l-3.200 4.700H1L6 8z" fill="#000" stroke="#000" strokeWidth=".6" />
        </svg>
      </div>
      {/* page */}
      <div className="flex h-[670px] shrink-0 border-l-[3px] border-t-[3px] border-b-2 border-r-4 border-b-[#e6e6e6] border-r-[#f0f0f0] border-[#777] bg-white">
        <h1 className="flex flex-1 items-start pl-[17px] pt-[20px] font-['Liberation_Serif','Noto_Sans_CJK_SC',serif] text-[51px] leading-[60px] text-black">
          {"It works!".split("").map((c, i) => (
            <span key={i} className={"flex w-[27.300px] shrink-0 justify-center whitespace-pre [-webkit-text-stroke:0.500px_black] " + (letterScale[c] ?? "")}>
              {c}
            </span>
          ))}
        </h1>
        <div className="flex w-[27px] flex-col items-center justify-between border-l border-[#e8e8e8] bg-[#f0f0f0] pb-[9px] pt-[12px]">
          <Up className="h-[7px] w-[12px] text-[#8a8a8a]" />
          <Down className="h-[7px] w-[12px] text-[#8a8a8a]" />
        </div>
      </div>
      {/* status bar */}
      <div className="mt-[2px] flex flex-1 items-center border-t-2 border-[#a9a9a9] bg-[#f1edec] whitespace-nowrap shadow-[inset_0_1px_0_#fff]">
        <span className="ml-[5px]">
          <Shield />
        </span>
        <span className="ml-[8px] w-[376px]">完成</span>
        {[0, 1, 2, 3, 4, 5].map((i) => (
          <span key={i} className="h-[31px] w-[38.700px] border-l-2 border-[#d6dad8]" />
        ))}
        <span className="h-[31px] w-[8px] border-l-2 border-[#d6dad8]" />
        <Globe />
        <span className="ml-[7px] w-[328px] [word-spacing:-1.300px]">Internet | 保护模式: 启用</span>
        <span className="flex h-[31px] w-[76px] items-center border-l-2 border-[#d6dad8] pl-[12px]">
          <ProtectIcon />
          <Down className="ml-[15px] h-[7px] w-[12px] text-[#222]" />
        </span>
        <span className="flex h-[31px] flex-1 items-center border-l-2 border-[#d6dad8] pl-[17px]">
          <span className="mb-[4px]">
            <ZoomIcon />
          </span>
          <span className="ml-[4px] w-[81px] tracking-[0.600px]">100%</span>
          <Down className="h-[7px] w-[12px] text-[#111]" />
          <svg viewBox="0 0 14 14" className="ml-auto mr-[2px] mt-[14px] h-[14px] w-[14px]">
            <path d="M10 0h3v3h-3zM5 5h3v3H5zM10 5h3v3h-3zM0 10h3v3H0zM5 10h3v3H5zM10 10h3v3h-3z" fill="#bdb8b6" />
          </svg>
        </span>
      </div>
    </div>
  </div>
);

/* ---------- taskbar ---------- */
const taskBtn =
  "flex h-[63px] shrink-0 items-center justify-center rounded-[4px] border-[1.500px] border-[#4e6075] shadow-[inset_0_0_0_1.500px_#e8f1fa]";
const taskBlue = " bg-[linear-gradient(135deg,#e3edf8_0%,#c3d8ee_50%,#b4cfeb_100%)]";

const StartOrb = () => (
  <svg viewBox="0 0 60 60" className="h-[60px] w-[60px] shrink-0">
    <circle cx="30" cy="30" r="28.500" fill="url(#orb)" stroke="#2c587e" strokeWidth="1.500" />
    <circle cx="30" cy="30" r="29.300" fill="none" stroke="#b8d8ee" strokeWidth=".8" opacity=".7" />
    <path d="M3 28C4 12 16 3 30 3s26 9 27 25c-8 4-18 0-27 0s-19 4-27 0z" fill="url(#orbGloss)" />
    <path d="M19 13.500c4-2 8-1.500 12.500.7l-3.300 13.300c-4-2-8.500-2.300-13-.5z" fill="#e8562a" />
    <path d="M33.500 15c5 2.700 9 3 15 .5L45 29c-5 2.500-10 2-15-.5z" fill="#8cc540" />
    <path d="M14.500 29.500c4.500-2 9-1.500 13 .6l-3.300 13C20 41 16 40.500 11.500 42.500z" fill="#3e9ae0" />
    <path d="M29.800 31c4.500 2.300 9.500 2.800 14.200.7l-3.300 13c-5 2.200-10 1.700-14.200-.7z" fill="#fcc02a" />
  </svg>
);
const Explorer = () => (
  <svg viewBox="0 0 54 50" className="h-[50px] w-[54px]">
    <path d="M3 46V5l2-3h19l2 4h11l2 4h12v36z" fill="#e6c866" stroke="#b9923a" />
    <path d="M6 3.500h16V9H6z" fill="#f8f4e6" />
    <path d="M7 3.500h6v4H7z" fill="#1cb838" />
    <path d="M18 6.500h17V12H18z" fill="#f8f4e6" />
    <path d="M19.500 6.500h6v4h-6z" fill="#d84a2c" />
    <path d="M30 9.500h19V15H30z" fill="#f8f4e6" />
    <path d="M33 10h6v4h-6z" fill="#2a8ae0" />
    <path d="M3 14h28l3-2h18v34H3z" fill="#f6e08e" stroke="#c9a548" />
    <path d="M9 48V31c0-2 1-3 3-3h32c2 0 3 1 3 3v17H37V38H19v10z" fill="#83cdec" stroke="#3f9cc4" opacity=".95" />
    <path d="M11 31h34v4H11z" fill="#c8ecfa" opacity=".8" />
    <path d="M14 23l1.200 6.500 6 2-6 1.700L14 40l-1.600-6.800-6-1.700 6-2z" fill="#fff" />
  </svg>
);
const MediaPlayer = () => (
  <svg viewBox="0 0 48 44" className="h-[44px] w-[48px]">
    <path d="M8 4h34v34l-34 2z" fill="#8fc3e0" stroke="#4f94bc" />
    <path d="M5 3h33v38L5 39z" fill="#a9d4ea" stroke="#5a9ec2" />
    <path d="M1.500 2h31v40l-31-3z" fill="#9ccbe4" stroke="#4f94bc" />
    <circle cx="18" cy="22" r="14.500" fill="#f2711c" stroke="#d8641a" />
    <path d="M5 18a14 14 0 0126 0c-8 4-18 4-26 0z" fill="#fba568" opacity=".6" />
    <path d="M12.500 13.500v17l15-8.500z" fill="#fff" />
  </svg>
);
const Cmd = () => (
  <div className="flex h-[41px] w-[48px] flex-col border border-[#8c8f94] bg-black">
    <div className="h-[4px] shrink-0 bg-[#d3d3d3]" />
    <div className="flex items-start pl-[5px] pt-[3px] font-['Liberation_Mono',monospace] text-[13px] leading-[14px] tracking-[-1px] text-white">
      C:\
      <span className="ml-[4px] mt-[10px] h-[2px] w-[13px] bg-white" />
    </div>
  </div>
);
const Toolbox = () => (
  <svg viewBox="0 0 52 52" className="h-[52px] w-[52px]">
    <path d="M6 14l12-4v16H6z" fill="#d5d5cf" stroke="#9a9a94" />
    <circle cx="8.500" cy="17" r="1.700" fill="#2a7a2a" />
    <path d="M18 1l32 4-4 28-30-5z" fill="#e0e0de" stroke="#9a9a98" />
    <path d="M20 5l27 3.500-3.500 21L18 25z" fill="url(#screen)" />
    <path d="M38 34l6 1 2 6-8 3z" fill="#d5d5d0" />
    <path d="M1 30l6-5 30 3 2 5-7 17L1 45z" fill="url(#steel)" stroke="#5f6b70" />
    <path d="M1 32l31 4v14" fill="none" stroke="#56646a" />
    <path d="M13 28c3-6 12-6 14 2" fill="none" stroke="#333" strokeWidth="2" />
    <path d="M7 32v6M21 34v6" stroke="#eef2f4" strokeWidth="3" />
  </svg>
);
const Flag = () => (
  <svg viewBox="0 0 26 26" className="h-[26px] w-[26px]">
    <path d="M1 1h3v24H1z" fill="#fff" stroke="#4b5766" strokeWidth=".9" />
    <path d="M4.500 3c4-1.500 6-1 9 1s6 2 10 .8V13c-4 1.500-7 1-10-.8s-5-2-9-.5z" fill="#fff" stroke="#4b5766" strokeWidth=".9" />
    <circle cx="18" cy="18.500" r="7" fill="#e0261e" stroke="#a81812" />
    <path d="M15 15.500l6 6M21 15.500l-6 6" stroke="#fff" strokeWidth="2.300" />
  </svg>
);
const Network = () => (
  <svg viewBox="0 0 26 26" className="h-[26px] w-[26px]">
    <path d="M9 4.500h15V22H9z" fill="#8fa3b9" stroke="#3f4a58" strokeWidth="3.400" />
    <path d="M9 4.500h15V22H9z" fill="none" stroke="#fff" strokeWidth="1.400" />
    <path d="M2 1v8h7V1M5.500 9.500V25" fill="none" stroke="#3f4a58" strokeWidth="4.200" />
    <path d="M2 1v7.500h7V1M5.500 9V25M5.500 1v7" fill="none" stroke="#fff" strokeWidth="1.900" />
    <path d="M17.500 11.500L25 25H10z" fill="#fbd618" stroke="#a88a08" />
    <path d="M17.500 16v5M17.500 22v1.800" stroke="#222" strokeWidth="2" />
  </svg>
);
const Speaker = () => (
  <svg viewBox="0 0 26 26" className="h-[26px] w-[26px]">
    <path d="M1 8h4l7-6.500v23L5 18H1z" fill="#fff" stroke="#4b5766" strokeWidth="1" />
    <path d="M15 9c2 2 2 6 0 8M18.500 6.500c3.500 3.500 3.500 9.500 0 13M22 4c5 5 5 13 0 18" fill="none" stroke="#5b6a7c" strokeWidth="2.600" />
    <path d="M15 9c2 2 2 6 0 8M18.500 6.500c3.500 3.500 3.500 9.500 0 13M22 4c5 5 5 13 0 18" fill="none" stroke="#fff" strokeWidth="1.300" />
  </svg>
);

const Taskbar = () => (
  <div className="absolute bottom-0 left-0 flex h-[65px] w-full items-start border-t-2 border-[#4d5d6e] bg-[linear-gradient(90deg,#8aa0b8_0,#8aa0b8_80px,#b2cfea_120px,#b2cfea_1280px,#8ba1b9_1345px,#8ba1b9_100%)] shadow-[inset_0_1px_0_#c9dced]">
    <span className="ml-[13px] mt-[2px]">
      <StartOrb />
    </span>
    <div className={taskBtn + " ml-[22px] w-[88px] bg-[linear-gradient(120deg,#f4f6f9_0%,#dde7f2_50%,#cfdff0_100%)]"}>
      <BigIE />
    </div>
    <div className="h-[63px] w-[8px] rounded-r-[4px] border-[1.500px] border-l-0 border-[#5a6d83] bg-[#cfe0f1]" />
    <div className={taskBtn + taskBlue + " ml-[4px] w-[87px] pr-[2px]"}>
      <Explorer />
    </div>
    <div className="h-[63px] w-[8px] rounded-r-[4px] border-[1.500px] border-l-0 border-[#5a6d83] bg-[#bdd6ef]" />
    <span className="ml-[29px] mt-[11px] w-[75px]">
      <MediaPlayer />
    </span>
    <div className={taskBtn + taskBlue + " w-[96px] pb-[5px] pr-[2px]"}>
      <Cmd />
    </div>
    <div className={taskBtn + taskBlue + " ml-[4px] w-[96px] pb-[4px] pr-[2px]"}>
      <Toolbox />
    </div>
    <div className="ml-auto flex h-full items-center">
      <Up className="h-[8px] w-[13px] text-white drop-shadow-[0_0_1px_#333]" />
      <span className="ml-[20px]">
        <Flag />
      </span>
      <span className="ml-[13px]">
        <Network />
      </span>
      <span className="ml-[12px]">
        <Speaker />
      </span>
      <div className="ml-[13px] flex w-[120px] flex-col items-center pb-[2px] leading-[29px] text-white">
        <span>15:38</span>
        <span className="tracking-[0.200px]">2024/10/27</span>
      </div>
      <span className="ml-px h-[62px] w-[23px] border-[1.500px] border-[#5e7287] bg-[linear-gradient(160deg,#a5b9cc_0%,#8096ac_45%,#7c92a9_55%,#a9c8e6_100%)] shadow-[inset_0_0_0_1px_#bccddd]" />
    </div>
  </div>
);

const LanguageBar = () => (
  <div className="absolute left-[1439px] top-[1130px] flex h-[41px] w-[162px] items-center border-t-2 border-[#55585b] bg-[linear-gradient(#c9cacb_0%,#8b8d8f_25%,#6a6d70_48%,#46494c_52%,#4a4e52_100%)]">
    <svg viewBox="0 0 14 28" className="ml-[6px] h-[28px] w-[14px]">
      {[1, 7, 13, 19, 25].map((y) => (
        <path key={y} d={`M0 ${y}h3v2H0zM5 ${y}h3v2H5zM10 ${y}h3v2h-3z`} fill="#1e2022" />
      ))}
    </svg>
    <span className="ml-[13px] w-[21px] font-['Liberation_Mono',monospace] text-[18px] leading-none text-white">CH</span>
    <svg viewBox="0 0 24 22" className="ml-[13px] h-[22px] w-[24px]">
      <path d="M4 7c3-5 7 1 10-2s5-2 6-4" fill="none" stroke="#a9a9a9" strokeWidth="1.300" />
      <rect x=".5" y="9" width="23" height="12.500" rx="1" fill="#c6c6c6" />
      <path d="M3 12.500h18M3 15.500h18" stroke="#555" strokeWidth="1.400" strokeDasharray="2 1.200" />
      <path d="M5 18.800h14" stroke="#555" strokeWidth="1.400" />
    </svg>
    <span className="ml-[12px] flex h-[24px] w-[24px] items-center justify-center rounded-full border-2 border-[#9b9b9b] bg-[radial-gradient(circle_at_50%_30%,#2a3cff,#0000a0)] text-[17px] font-bold leading-none text-white">
      ?
    </span>
    <span className="ml-[17px] flex flex-col items-center gap-[11px]">
      <span className="h-[3px] w-[8px] bg-white" />
      <Down className="h-[5px] w-[9px] text-white" />
    </span>
  </div>
);

export default function App() {
  return (
    <div className="relative h-[1236px] w-[1648px] overflow-hidden bg-[#0060c0] font-['Noto_Sans','Noto_Sans_CJK_SC',sans-serif] text-[19.400px] leading-[26px] text-black">
      <Gradients />
      {/* desktop wallpaper */}
      <div className="absolute inset-0 bg-[linear-gradient(#003f8c_0%,#00438f_20%,#0052ad_60%,#005cc2_100%)]" />
      <div className="absolute left-0 top-0 h-full w-[60px] bg-[linear-gradient(#0047a8_0%,#0050b4_12%,#006fd0_30%,#0d97e6_46%,#20bff3_60%,#38d2f8_70%,#14bff8_86%,#05aff5_95%)]" />
      <div className="absolute left-0 top-0 h-[24px] w-full bg-[linear-gradient(90deg,#0043a3_0%,#0a52a8_30%,#0655ab_58%,#003f8c_78%,#003f88_88%,#1b5690_94%,#083f84_100%)]" />
      <svg viewBox="0 0 24 110" className="absolute left-0 top-[1060px] h-[110px] w-[24px]">
        <path d="M0 32L24 15M0 38L24 12" stroke="#c7f0fc" strokeWidth="2" opacity=".8" />
        <path d="M0 103C8 92 16 82 24 72" stroke="#b4f05a" strokeWidth="3.500" fill="none" />
      </svg>
      <svg viewBox="0 0 60 20" className="absolute left-[33px] top-[14px] h-[20px] w-[60px]">
        <ellipse cx="30" cy="9" rx="28" ry="7" fill="#2a5f98" stroke="#9fb0c0" strokeWidth="2" />
      </svg>
      <span className="absolute left-[9px] top-[262px] font-medium text-white [text-shadow:1px_1px_2px_#000]">h</span>
      <ManagementWindow />
      <IEWindow />
      <Taskbar />
      <LanguageBar />
    </div>
  );
}
